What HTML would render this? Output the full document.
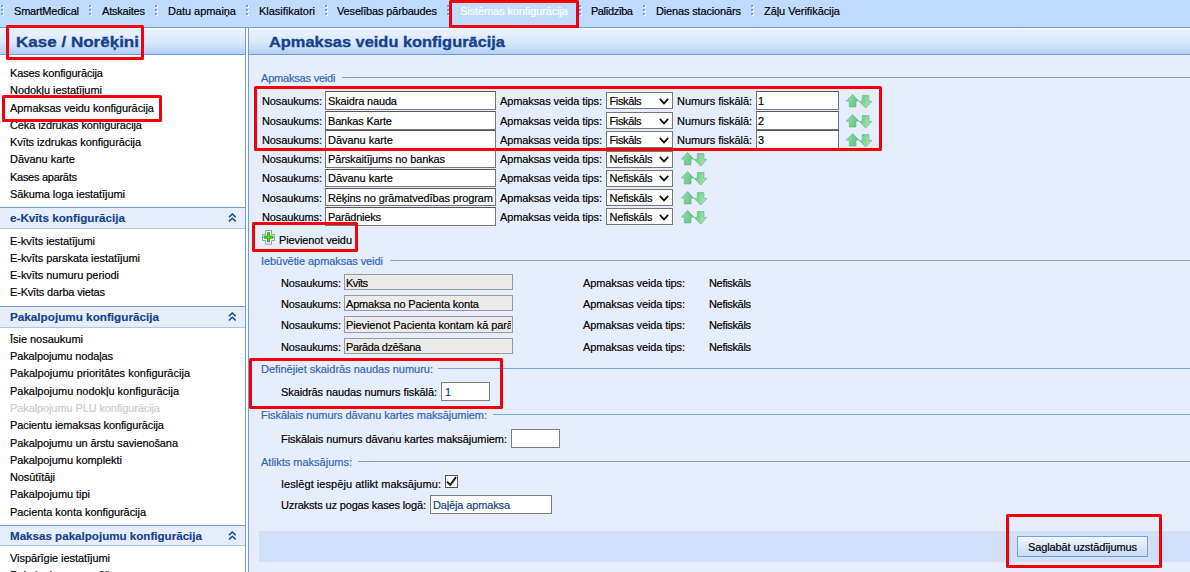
<!DOCTYPE html>
<html><head><meta charset="utf-8"><title>Apmaksas veidu konfigurācija</title><style>
html,body{margin:0;padding:0}
body{width:1190px;height:572px;overflow:hidden;position:relative;background:#bfdbff;font-family:"Liberation Sans", sans-serif;}
.abs,.t,.sh,.ln,.inp,.inpd,.inp1,.sel,.red,.cb,.btn,.bbar,.chev{position:absolute;box-sizing:content-box}
.t{white-space:pre;line-height:16px;height:16px;-webkit-text-stroke:0.18px currentColor}
#navline{position:absolute;left:0;top:27px;width:1190px;height:1px;background:#6f9dd9}
#navsel{position:absolute;left:453px;top:0;width:122px;height:24px;background:#c1dcff}
.dots{position:absolute;top:5px;width:3px;height:12px}
#lhead{position:absolute;left:0;top:28px;width:245px;height:26px;background:linear-gradient(#ffffff 0%,#e9f2ff 7%,#dce9fd 52%,#c6dcfb 78%,#afd0fb 100%);border-bottom:1px solid #6f9dd9}
#lbody{position:absolute;left:0;top:55px;width:245px;height:517px;background:#fff}
#lbord{position:absolute;left:245px;top:28px;width:1px;height:544px;background:#6f9dd9}
#split{position:absolute;left:246px;top:28px;width:2px;height:544px;background:#fdfeff}
#rbord{position:absolute;left:248px;top:28px;width:1px;height:544px;background:#6f9dd9}
#rhead{position:absolute;left:249px;top:28px;width:941px;height:26px;background:linear-gradient(#ffffff 0%,#e9f2ff 7%,#dce9fd 52%,#c6dcfb 78%,#afd0fb 100%);border-bottom:1px solid #6f9dd9}
#rbody{position:absolute;left:249px;top:55px;width:941px;height:517px;background:#e6edfc}
.sh{left:0;width:245px;background:#e6eefd;border-top:1px solid #6f9dd9;border-bottom:1px solid #a9c7f0}
.ln{width:900px;height:1px;background:#7ba3dc;right:0}
.inp{background:#fff;border:1px solid #767676;border-top-color:#555}
.inp1{background:#fff;border:1px solid #7f7f7f}
.inpd{background:#ebebeb;border:1px solid #9a9a9a}
.sel{background:#fff;border:1px solid #767676}
.cb{width:11px;height:11px;background:#fff;border:1px solid #555}
.bbar{left:259px;top:531px;width:931px;height:31px;background:#d1dff8}
.btn{border:1px solid #7b9ed6;background:linear-gradient(#f4f8ff,#dbe7fb 50%,#c7dafa)}
.red{border:3px solid #f4000c;border-radius:1.5px}
</style></head>
<body>
<svg width="0" height="0" style="position:absolute"><defs><linearGradient id="ga" x1="0" y1="0" x2="1" y2="0.3"><stop offset="0" stop-color="#b2e5c0"/><stop offset="0.55" stop-color="#7ace94"/><stop offset="1" stop-color="#68c486"/></linearGradient><linearGradient id="gb" x1="0" y1="0" x2="1" y2="0.3"><stop offset="0" stop-color="#6cc689"/><stop offset="0.5" stop-color="#84d39c"/><stop offset="1" stop-color="#aee3bd"/></linearGradient></defs></svg><div id="navsel"></div><svg class="dots" style="left:1px" width="3" height="12" viewBox="0 0 3 12"><g fill="#fff"><rect x="1" y="1" width="2" height="2"/><rect x="1" y="5" width="2" height="2"/><rect x="1" y="9" width="2" height="2"/></g><g fill="#6a9ee6"><rect x="0" y="0" width="2" height="2"/><rect x="0" y="4" width="2" height="2"/><rect x="0" y="8" width="2" height="2"/></g></svg><svg class="dots" style="left:89px" width="3" height="12" viewBox="0 0 3 12"><g fill="#fff"><rect x="1" y="1" width="2" height="2"/><rect x="1" y="5" width="2" height="2"/><rect x="1" y="9" width="2" height="2"/></g><g fill="#6a9ee6"><rect x="0" y="0" width="2" height="2"/><rect x="0" y="4" width="2" height="2"/><rect x="0" y="8" width="2" height="2"/></g></svg><svg class="dots" style="left:155px" width="3" height="12" viewBox="0 0 3 12"><g fill="#fff"><rect x="1" y="1" width="2" height="2"/><rect x="1" y="5" width="2" height="2"/><rect x="1" y="9" width="2" height="2"/></g><g fill="#6a9ee6"><rect x="0" y="0" width="2" height="2"/><rect x="0" y="4" width="2" height="2"/><rect x="0" y="8" width="2" height="2"/></g></svg><svg class="dots" style="left:246px" width="3" height="12" viewBox="0 0 3 12"><g fill="#fff"><rect x="1" y="1" width="2" height="2"/><rect x="1" y="5" width="2" height="2"/><rect x="1" y="9" width="2" height="2"/></g><g fill="#6a9ee6"><rect x="0" y="0" width="2" height="2"/><rect x="0" y="4" width="2" height="2"/><rect x="0" y="8" width="2" height="2"/></g></svg><svg class="dots" style="left:325px" width="3" height="12" viewBox="0 0 3 12"><g fill="#fff"><rect x="1" y="1" width="2" height="2"/><rect x="1" y="5" width="2" height="2"/><rect x="1" y="9" width="2" height="2"/></g><g fill="#6a9ee6"><rect x="0" y="0" width="2" height="2"/><rect x="0" y="4" width="2" height="2"/><rect x="0" y="8" width="2" height="2"/></g></svg><svg class="dots" style="left:447px" width="3" height="12" viewBox="0 0 3 12"><g fill="#fff"><rect x="1" y="1" width="2" height="2"/><rect x="1" y="5" width="2" height="2"/><rect x="1" y="9" width="2" height="2"/></g><g fill="#6a9ee6"><rect x="0" y="0" width="2" height="2"/><rect x="0" y="4" width="2" height="2"/><rect x="0" y="8" width="2" height="2"/></g></svg><svg class="dots" style="left:579px" width="3" height="12" viewBox="0 0 3 12"><g fill="#fff"><rect x="1" y="1" width="2" height="2"/><rect x="1" y="5" width="2" height="2"/><rect x="1" y="9" width="2" height="2"/></g><g fill="#6a9ee6"><rect x="0" y="0" width="2" height="2"/><rect x="0" y="4" width="2" height="2"/><rect x="0" y="8" width="2" height="2"/></g></svg><svg class="dots" style="left:643px" width="3" height="12" viewBox="0 0 3 12"><g fill="#fff"><rect x="1" y="1" width="2" height="2"/><rect x="1" y="5" width="2" height="2"/><rect x="1" y="9" width="2" height="2"/></g><g fill="#6a9ee6"><rect x="0" y="0" width="2" height="2"/><rect x="0" y="4" width="2" height="2"/><rect x="0" y="8" width="2" height="2"/></g></svg><svg class="dots" style="left:751px" width="3" height="12" viewBox="0 0 3 12"><g fill="#fff"><rect x="1" y="1" width="2" height="2"/><rect x="1" y="5" width="2" height="2"/><rect x="1" y="9" width="2" height="2"/></g><g fill="#6a9ee6"><rect x="0" y="0" width="2" height="2"/><rect x="0" y="4" width="2" height="2"/><rect x="0" y="8" width="2" height="2"/></g></svg><div id="navline"></div>
<div id="lhead"></div><div id="lbody"></div><div id="lbord"></div><div id="split"></div><div id="rbord"></div>
<div id="rhead"></div><div id="rbody"></div>
<div class="sh" style="top:207px;height:20px"></div><svg class="chev" style="left:227.8px;top:213.1px" width="9" height="10" viewBox="0 0 9 10"><path d="M0.9 4.3 L4.3 1 L7.7 4.3 M0.9 8.6 L4.3 5.3 L7.7 8.6" fill="none" stroke="#15428b" stroke-width="1.45"/></svg><div class="sh" style="top:306px;height:20px"></div><svg class="chev" style="left:227.8px;top:312.1px" width="9" height="10" viewBox="0 0 9 10"><path d="M0.9 4.3 L4.3 1 L7.7 4.3 M0.9 8.6 L4.3 5.3 L7.7 8.6" fill="none" stroke="#15428b" stroke-width="1.45"/></svg><div class="sh" style="top:525px;height:19px"></div><svg class="chev" style="left:227.8px;top:531.1px" width="9" height="10" viewBox="0 0 9 10"><path d="M0.9 4.3 L4.3 1 L7.7 4.3 M0.9 8.6 L4.3 5.3 L7.7 8.6" fill="none" stroke="#15428b" stroke-width="1.45"/></svg><div class="ln" style="left:342px;top:77px"></div><div class="ln" style="left:390px;top:260px"></div><div class="ln" style="left:438px;top:368px"></div><div class="ln" style="left:493px;top:414px"></div><div class="ln" style="left:358px;top:461px"></div><div class="inp" style="left:325px;top:91px;width:169px;height:17px"></div><div class="sel" style="left:606px;top:92px;width:65px;height:15px"></div><svg class="abs" style="left:659px;top:98px" width="10" height="7" viewBox="0 0 10 7"><path d="M0.8 0.9 L5 5.4 L9.2 0.9" fill="none" stroke="#111" stroke-width="1.7"/></svg><div class="inp" style="left:756px;top:91px;width:81px;height:17px"></div><svg class="abs" style="left:845.8px;top:93.9px" width="27" height="15" viewBox="0 0 27 15"><path d="M6.6 0.5 L12.8 7.1 L9.9 7.1 L9.9 12.9 L3.3 12.9 L3.3 7.1 L0.4 7.1 Z" fill="url(#ga)" stroke="#5fba7d" stroke-width="0.7"/><path d="M16.3 1.6 L22.9 1.6 L22.9 7.4 L25.8 7.4 L19.6 14 L13.4 7.4 L16.3 7.4 Z" fill="url(#gb)" stroke="#5fba7d" stroke-width="0.7"/></svg><div class="inp" style="left:325px;top:111px;width:169px;height:17px"></div><div class="sel" style="left:606px;top:112px;width:65px;height:15px"></div><svg class="abs" style="left:659px;top:118px" width="10" height="7" viewBox="0 0 10 7"><path d="M0.8 0.9 L5 5.4 L9.2 0.9" fill="none" stroke="#111" stroke-width="1.7"/></svg><div class="inp" style="left:756px;top:111px;width:81px;height:17px"></div><svg class="abs" style="left:845.8px;top:113.9px" width="27" height="15" viewBox="0 0 27 15"><path d="M6.6 0.5 L12.8 7.1 L9.9 7.1 L9.9 12.9 L3.3 12.9 L3.3 7.1 L0.4 7.1 Z" fill="url(#ga)" stroke="#5fba7d" stroke-width="0.7"/><path d="M16.3 1.6 L22.9 1.6 L22.9 7.4 L25.8 7.4 L19.6 14 L13.4 7.4 L16.3 7.4 Z" fill="url(#gb)" stroke="#5fba7d" stroke-width="0.7"/></svg><div class="inp" style="left:325px;top:130px;width:169px;height:17px"></div><div class="sel" style="left:606px;top:131px;width:65px;height:15px"></div><svg class="abs" style="left:659px;top:137px" width="10" height="7" viewBox="0 0 10 7"><path d="M0.8 0.9 L5 5.4 L9.2 0.9" fill="none" stroke="#111" stroke-width="1.7"/></svg><div class="inp" style="left:756px;top:130px;width:81px;height:17px"></div><svg class="abs" style="left:845.8px;top:132.9px" width="27" height="15" viewBox="0 0 27 15"><path d="M6.6 0.5 L12.8 7.1 L9.9 7.1 L9.9 12.9 L3.3 12.9 L3.3 7.1 L0.4 7.1 Z" fill="url(#ga)" stroke="#5fba7d" stroke-width="0.7"/><path d="M16.3 1.6 L22.9 1.6 L22.9 7.4 L25.8 7.4 L19.6 14 L13.4 7.4 L16.3 7.4 Z" fill="url(#gb)" stroke="#5fba7d" stroke-width="0.7"/></svg><div class="inp" style="left:325px;top:150px;width:169px;height:16px"></div><div class="sel" style="left:606px;top:151px;width:65px;height:15px"></div><svg class="abs" style="left:659px;top:156px" width="10" height="7" viewBox="0 0 10 7"><path d="M0.8 0.9 L5 5.4 L9.2 0.9" fill="none" stroke="#111" stroke-width="1.7"/></svg><svg class="abs" style="left:680.8px;top:151.9px" width="27" height="15" viewBox="0 0 27 15"><path d="M6.6 0.5 L12.8 7.1 L9.9 7.1 L9.9 12.9 L3.3 12.9 L3.3 7.1 L0.4 7.1 Z" fill="url(#ga)" stroke="#5fba7d" stroke-width="0.7"/><path d="M16.3 1.6 L22.9 1.6 L22.9 7.4 L25.8 7.4 L19.6 14 L13.4 7.4 L16.3 7.4 Z" fill="url(#gb)" stroke="#5fba7d" stroke-width="0.7"/></svg><div class="inp" style="left:325px;top:169px;width:169px;height:16px"></div><div class="sel" style="left:606px;top:170px;width:65px;height:15px"></div><svg class="abs" style="left:659px;top:175px" width="10" height="7" viewBox="0 0 10 7"><path d="M0.8 0.9 L5 5.4 L9.2 0.9" fill="none" stroke="#111" stroke-width="1.7"/></svg><svg class="abs" style="left:680.8px;top:170.9px" width="27" height="15" viewBox="0 0 27 15"><path d="M6.6 0.5 L12.8 7.1 L9.9 7.1 L9.9 12.9 L3.3 12.9 L3.3 7.1 L0.4 7.1 Z" fill="url(#ga)" stroke="#5fba7d" stroke-width="0.7"/><path d="M16.3 1.6 L22.9 1.6 L22.9 7.4 L25.8 7.4 L19.6 14 L13.4 7.4 L16.3 7.4 Z" fill="url(#gb)" stroke="#5fba7d" stroke-width="0.7"/></svg><div class="inp" style="left:325px;top:188px;width:169px;height:16px"></div><div class="sel" style="left:606px;top:189px;width:65px;height:15px"></div><svg class="abs" style="left:659px;top:195px" width="10" height="7" viewBox="0 0 10 7"><path d="M0.8 0.9 L5 5.4 L9.2 0.9" fill="none" stroke="#111" stroke-width="1.7"/></svg><svg class="abs" style="left:680.8px;top:190.9px" width="27" height="15" viewBox="0 0 27 15"><path d="M6.6 0.5 L12.8 7.1 L9.9 7.1 L9.9 12.9 L3.3 12.9 L3.3 7.1 L0.4 7.1 Z" fill="url(#ga)" stroke="#5fba7d" stroke-width="0.7"/><path d="M16.3 1.6 L22.9 1.6 L22.9 7.4 L25.8 7.4 L19.6 14 L13.4 7.4 L16.3 7.4 Z" fill="url(#gb)" stroke="#5fba7d" stroke-width="0.7"/></svg><div class="inp" style="left:325px;top:207px;width:169px;height:17px"></div><div class="sel" style="left:606px;top:208px;width:65px;height:15px"></div><svg class="abs" style="left:659px;top:214px" width="10" height="7" viewBox="0 0 10 7"><path d="M0.8 0.9 L5 5.4 L9.2 0.9" fill="none" stroke="#111" stroke-width="1.7"/></svg><svg class="abs" style="left:680.8px;top:209.9px" width="27" height="15" viewBox="0 0 27 15"><path d="M6.6 0.5 L12.8 7.1 L9.9 7.1 L9.9 12.9 L3.3 12.9 L3.3 7.1 L0.4 7.1 Z" fill="url(#ga)" stroke="#5fba7d" stroke-width="0.7"/><path d="M16.3 1.6 L22.9 1.6 L22.9 7.4 L25.8 7.4 L19.6 14 L13.4 7.4 L16.3 7.4 Z" fill="url(#gb)" stroke="#5fba7d" stroke-width="0.7"/></svg><svg class="abs" style="left:262px;top:230px" width="13" height="15" viewBox="0 0 13 15"><path d="M3.5 0.5h6v4h3v6h-3v3.7h-6v-3.7h-3v-6h3z" fill="#f2f7f4" stroke="#8da2b4" stroke-width="1"/><path d="M5.5 2.5h2v3.5h3.5v2.2h-3.5v3.7h-2v-3.7h-3.5v-2.2h3.5z" fill="#52e00c" stroke="#2f9f26" stroke-width="0.9"/></svg><div class="inpd" style="left:344px;top:274px;width:167px;height:14px"></div><div class="inpd" style="left:344px;top:295px;width:167px;height:14px"></div><div class="inpd" style="left:344px;top:316px;width:167px;height:15px"></div><div class="inpd" style="left:344px;top:338px;width:167px;height:14px"></div><div class="inp1" style="left:441px;top:382px;width:47px;height:17px"></div><div class="inp1" style="left:511px;top:429px;width:47px;height:17px"></div><div class="cb" style="left:445px;top:475px"></div><svg class="abs" style="left:445px;top:475px" width="13" height="13" viewBox="0 0 13 13"><path d="M2 6.6 L5.2 10 L11 2.2" fill="none" stroke="#1a1a1a" stroke-width="2"/></svg><div class="inp1" style="left:430px;top:495px;width:120px;height:17px"></div><div class="bbar"></div><div class="btn" style="left:1017px;top:536px;width:129px;height:19px"></div>
<span class="t" style="left:14px;top:3.0px;font-size:11px;font-weight:normal;color:#000;letter-spacing:-0.205px">SmartMedical</span><span class="t" style="left:102px;top:3.0px;font-size:11px;font-weight:normal;color:#000;letter-spacing:-0.205px">Atskaites</span><span class="t" style="left:168px;top:3.0px;font-size:11px;font-weight:normal;color:#000;letter-spacing:-0.045px">Datu apmaiņa</span><span class="t" style="left:259px;top:3.0px;font-size:11px;font-weight:normal;color:#000;letter-spacing:-0.021px">Klasifikatori</span><span class="t" style="left:337px;top:3.0px;font-size:11px;font-weight:normal;color:#000;letter-spacing:-0.153px">Veselības pārbaudes</span><span class="t" style="left:460px;top:3.0px;font-size:11px;font-weight:normal;color:#fff;letter-spacing:-0.098px">Sistēmas konfigurācija</span><span class="t" style="left:591px;top:3.0px;font-size:11px;font-weight:normal;color:#000;letter-spacing:-0.484px">Palīdzība</span><span class="t" style="left:656px;top:3.0px;font-size:11px;font-weight:normal;color:#000;letter-spacing:-0.152px">Dienas stacionārs</span><span class="t" style="left:764px;top:3.0px;font-size:11px;font-weight:normal;color:#000;letter-spacing:-0.065px">Zāļu Verifikācija</span><span class="t" style="left:16px;top:34.0px;font-size:15px;font-weight:bold;color:#15428b;transform:scaleX(1.1348);transform-origin:0 50%;-webkit-text-stroke:0.35px #15428b">Kase / Norēķini</span><span class="t" style="left:10px;top:65.0px;font-size:11px;font-weight:normal;color:#000;letter-spacing:-0.133px">Kases konfigurācija</span><span class="t" style="left:10px;top:82.0px;font-size:11px;font-weight:normal;color:#000;letter-spacing:-0.052px">Nodokļu iestatījumi</span><span class="t" style="left:10px;top:100.0px;font-size:11px;font-weight:normal;color:#000;letter-spacing:-0.057px">Apmaksas veidu konfigurācija</span><span class="t" style="left:10px;top:117.0px;font-size:11px;font-weight:normal;color:#000;letter-spacing:-0.097px">Čeka izdrukas konfigurācija</span><span class="t" style="left:10px;top:134.0px;font-size:11px;font-weight:normal;color:#000;letter-spacing:-0.084px">Kvīts izdrukas konfigurācija</span><span class="t" style="left:10px;top:151.0px;font-size:11px;font-weight:normal;color:#000;letter-spacing:-0.040px">Dāvanu karte</span><span class="t" style="left:10px;top:169.0px;font-size:11px;font-weight:normal;color:#000;letter-spacing:-0.277px">Kases aparāts</span><span class="t" style="left:10px;top:186.0px;font-size:11px;font-weight:normal;color:#000;letter-spacing:-0.081px">Sākuma loga iestatījumi</span><span class="t" style="left:10px;top:233.0px;font-size:11px;font-weight:normal;color:#000;letter-spacing:-0.066px">E-kvīts iestatījumi</span><span class="t" style="left:10px;top:250.0px;font-size:11px;font-weight:normal;color:#000;letter-spacing:-0.053px">E-kvīts parskata iestatījumi</span><span class="t" style="left:10px;top:267.0px;font-size:11px;font-weight:normal;color:#000;letter-spacing:-0.050px">E-kvīts numuru periodi</span><span class="t" style="left:10px;top:284.0px;font-size:11px;font-weight:normal;color:#000;letter-spacing:-0.181px">E-Kvīts darba vietas</span><span class="t" style="left:10px;top:331.0px;font-size:11px;font-weight:normal;color:#000;letter-spacing:-0.029px">Īsie nosaukumi</span><span class="t" style="left:10px;top:348.0px;font-size:11px;font-weight:normal;color:#000;letter-spacing:-0.122px">Pakalpojumu nodaļas</span><span class="t" style="left:10px;top:365.0px;font-size:11px;font-weight:normal;color:#000;letter-spacing:0.007px">Pakalpojumu prioritātes konfigurācija</span><span class="t" style="left:10px;top:383.0px;font-size:11px;font-weight:normal;color:#000;letter-spacing:-0.031px">Pakalpojumu nodokļu konfigurācija</span><span class="t" style="left:10px;top:400.0px;font-size:11px;font-weight:normal;color:#cbcbcb;letter-spacing:-0.103px">Pakalpojumu PLU konfigurācija</span><span class="t" style="left:10px;top:417.0px;font-size:11px;font-weight:normal;color:#000;letter-spacing:-0.105px">Pacientu iemaksas konfigurācija</span><span class="t" style="left:10px;top:435.0px;font-size:11px;font-weight:normal;color:#000;letter-spacing:-0.104px">Pakalpojumu un ārstu savienošana</span><span class="t" style="left:10px;top:452.0px;font-size:11px;font-weight:normal;color:#000;letter-spacing:-0.056px">Pakalpojumu komplekti</span><span class="t" style="left:10px;top:469.0px;font-size:11px;font-weight:normal;color:#000;letter-spacing:-0.095px">Nosūtītāji</span><span class="t" style="left:10px;top:486.0px;font-size:11px;font-weight:normal;color:#000;letter-spacing:-0.048px">Pakalpojumu tipi</span><span class="t" style="left:10px;top:504.0px;font-size:11px;font-weight:normal;color:#000;letter-spacing:-0.059px">Pacienta konta konfigurācija</span><span class="t" style="left:10px;top:550.0px;font-size:11px;font-weight:normal;color:#000;letter-spacing:-0.062px">Vispārīgie iestatījumi</span><span class="t" style="left:10px;top:567.0px;font-size:11px;font-weight:normal;color:#000;letter-spacing:-0.032px">Pakalpojumu grupēšana</span><span class="t" style="left:10px;top:210.0px;font-size:11px;font-weight:bold;color:#15428b;transform:scaleX(1.0628);transform-origin:0 50%;-webkit-text-stroke:0.15px #15428b">e-Kvīts konfigurācija</span><span class="t" style="left:10px;top:309.0px;font-size:11px;font-weight:bold;color:#15428b;transform:scaleX(1.0644);transform-origin:0 50%;-webkit-text-stroke:0.15px #15428b">Pakalpojumu konfigurācija</span><span class="t" style="left:10px;top:528.0px;font-size:11px;font-weight:bold;color:#15428b;transform:scaleX(1.0539);transform-origin:0 50%;-webkit-text-stroke:0.15px #15428b">Maksas pakalpojumu konfigurācija</span><span class="t" style="left:269px;top:34.0px;font-size:15px;font-weight:bold;color:#15428b;transform:scaleX(1.0930);transform-origin:0 50%;-webkit-text-stroke:0.35px #15428b">Apmaksas veidu konfigurācija</span><span class="t" style="left:261px;top:69.6px;font-size:11px;font-weight:normal;color:#3165b5;letter-spacing:-0.196px">Apmaksas veidi</span><span class="t" style="left:261px;top:252.6px;font-size:11px;font-weight:normal;color:#3165b5;letter-spacing:-0.066px">Iebūvētie apmaksas veidi</span><span class="t" style="left:261px;top:360.6px;font-size:11px;font-weight:normal;color:#3165b5;letter-spacing:-0.013px">Definējiet skaidrās naudas numuru:</span><span class="t" style="left:261px;top:406.6px;font-size:11px;font-weight:normal;color:#3165b5;letter-spacing:-0.063px">Fiskālais numurs dāvanu kartes maksājumiem:</span><span class="t" style="left:261px;top:453.6px;font-size:11px;font-weight:normal;color:#3165b5;letter-spacing:-0.005px">Atlikts maksājums:</span><span class="t" style="left:262px;top:93.0px;font-size:11px;font-weight:normal;color:#000;letter-spacing:-0.127px">Nosaukums:</span><span class="t" style="left:328px;top:93.0px;font-size:11px;font-weight:normal;color:#000;letter-spacing:-0.163px">Skaidra nauda</span><span class="t" style="left:500px;top:93.0px;font-size:11px;font-weight:normal;color:#000;letter-spacing:-0.102px">Apmaksas veida tips:</span><span class="t" style="left:609.5px;top:93.0px;font-size:11px;font-weight:normal;color:#000;letter-spacing:-0.372px">Fiskāls</span><span class="t" style="left:677px;top:93.0px;font-size:11px;font-weight:normal;color:#000;letter-spacing:-0.057px">Numurs fiskālā:</span><span class="t" style="left:758px;top:93.0px;font-size:11px;font-weight:normal;color:#000;letter-spacing:0.000px">1</span><span class="t" style="left:262px;top:113.0px;font-size:11px;font-weight:normal;color:#000;letter-spacing:-0.127px">Nosaukums:</span><span class="t" style="left:328px;top:113.0px;font-size:11px;font-weight:normal;color:#000;letter-spacing:-0.186px">Bankas Karte</span><span class="t" style="left:500px;top:113.0px;font-size:11px;font-weight:normal;color:#000;letter-spacing:-0.102px">Apmaksas veida tips:</span><span class="t" style="left:609.5px;top:113.0px;font-size:11px;font-weight:normal;color:#000;letter-spacing:-0.372px">Fiskāls</span><span class="t" style="left:677px;top:113.0px;font-size:11px;font-weight:normal;color:#000;letter-spacing:-0.057px">Numurs fiskālā:</span><span class="t" style="left:758px;top:113.0px;font-size:11px;font-weight:normal;color:#000;letter-spacing:0.000px">2</span><span class="t" style="left:262px;top:132.0px;font-size:11px;font-weight:normal;color:#000;letter-spacing:-0.127px">Nosaukums:</span><span class="t" style="left:328px;top:132.0px;font-size:11px;font-weight:normal;color:#000;letter-spacing:-0.040px">Dāvanu karte</span><span class="t" style="left:500px;top:132.0px;font-size:11px;font-weight:normal;color:#000;letter-spacing:-0.102px">Apmaksas veida tips:</span><span class="t" style="left:609.5px;top:132.0px;font-size:11px;font-weight:normal;color:#000;letter-spacing:-0.372px">Fiskāls</span><span class="t" style="left:677px;top:132.0px;font-size:11px;font-weight:normal;color:#000;letter-spacing:-0.057px">Numurs fiskālā:</span><span class="t" style="left:758px;top:132.0px;font-size:11px;font-weight:normal;color:#000;letter-spacing:0.000px">3</span><span class="t" style="left:262px;top:151.0px;font-size:11px;font-weight:normal;color:#000;letter-spacing:-0.127px">Nosaukums:</span><span class="t" style="left:328px;top:151.0px;font-size:11px;font-weight:normal;color:#000;letter-spacing:-0.129px">Pārskaitījums no bankas</span><span class="t" style="left:500px;top:151.0px;font-size:11px;font-weight:normal;color:#000;letter-spacing:-0.102px">Apmaksas veida tips:</span><span class="t" style="left:609.5px;top:151.0px;font-size:11px;font-weight:normal;color:#000;letter-spacing:-0.203px">Nefiskāls</span><span class="t" style="left:262px;top:170.0px;font-size:11px;font-weight:normal;color:#000;letter-spacing:-0.127px">Nosaukums:</span><span class="t" style="left:328px;top:170.0px;font-size:11px;font-weight:normal;color:#000;letter-spacing:-0.040px">Dāvanu karte</span><span class="t" style="left:500px;top:170.0px;font-size:11px;font-weight:normal;color:#000;letter-spacing:-0.102px">Apmaksas veida tips:</span><span class="t" style="left:609.5px;top:170.0px;font-size:11px;font-weight:normal;color:#000;letter-spacing:-0.203px">Nefiskāls</span><span class="t" style="left:262px;top:190.0px;font-size:11px;font-weight:normal;color:#000;letter-spacing:-0.127px">Nosaukums:</span><span class="t" style="left:328px;top:190.0px;font-size:11px;font-weight:normal;color:#000;letter-spacing:-0.125px">Rēķins no grāmatvedības program</span><span class="t" style="left:500px;top:190.0px;font-size:11px;font-weight:normal;color:#000;letter-spacing:-0.102px">Apmaksas veida tips:</span><span class="t" style="left:609.5px;top:190.0px;font-size:11px;font-weight:normal;color:#000;letter-spacing:-0.203px">Nefiskāls</span><span class="t" style="left:262px;top:209.0px;font-size:11px;font-weight:normal;color:#000;letter-spacing:-0.127px">Nosaukums:</span><span class="t" style="left:328px;top:209.0px;font-size:11px;font-weight:normal;color:#000;letter-spacing:-0.227px">Parādnieks</span><span class="t" style="left:500px;top:209.0px;font-size:11px;font-weight:normal;color:#000;letter-spacing:-0.102px">Apmaksas veida tips:</span><span class="t" style="left:609.5px;top:209.0px;font-size:11px;font-weight:normal;color:#000;letter-spacing:-0.203px">Nefiskāls</span><span class="t" style="left:279px;top:232.0px;font-size:11px;font-weight:normal;color:#000;letter-spacing:-0.115px">Pievienot veidu</span><span class="t" style="left:281px;top:275.0px;font-size:11px;font-weight:normal;color:#000;letter-spacing:-0.127px">Nosaukums:</span><span class="t" style="left:346px;top:275.0px;font-size:11px;font-weight:normal;color:#000;letter-spacing:-0.600px">Kvīts</span><span class="t" style="left:583px;top:275.0px;font-size:11px;font-weight:normal;color:#000;letter-spacing:-0.102px">Apmaksas veida tips:</span><span class="t" style="left:709px;top:275.0px;font-size:11px;font-weight:normal;color:#000;letter-spacing:-0.328px">Nefiskāls</span><span class="t" style="left:281px;top:296.0px;font-size:11px;font-weight:normal;color:#000;letter-spacing:-0.127px">Nosaukums:</span><span class="t" style="left:346px;top:296.0px;font-size:11px;font-weight:normal;color:#000;letter-spacing:-0.166px">Apmaksa no Pacienta konta</span><span class="t" style="left:583px;top:296.0px;font-size:11px;font-weight:normal;color:#000;letter-spacing:-0.102px">Apmaksas veida tips:</span><span class="t" style="left:709px;top:296.0px;font-size:11px;font-weight:normal;color:#000;letter-spacing:-0.328px">Nefiskāls</span><span class="t" style="left:281px;top:317.0px;font-size:11px;font-weight:normal;color:#000;letter-spacing:-0.127px">Nosaukums:</span><span class="t" style="left:346px;top:317.0px;font-size:11px;font-weight:normal;color:#000;letter-spacing:-0.094px;width:165px;overflow:hidden">Pievienot Pacienta kontam kā parā</span><span class="t" style="left:583px;top:317.0px;font-size:11px;font-weight:normal;color:#000;letter-spacing:-0.102px">Apmaksas veida tips:</span><span class="t" style="left:709px;top:317.0px;font-size:11px;font-weight:normal;color:#000;letter-spacing:-0.328px">Nefiskāls</span><span class="t" style="left:281px;top:339.0px;font-size:11px;font-weight:normal;color:#000;letter-spacing:-0.127px">Nosaukums:</span><span class="t" style="left:346px;top:339.0px;font-size:11px;font-weight:normal;color:#000;letter-spacing:-0.394px">Parāda dzēšana</span><span class="t" style="left:583px;top:339.0px;font-size:11px;font-weight:normal;color:#000;letter-spacing:-0.102px">Apmaksas veida tips:</span><span class="t" style="left:709px;top:339.0px;font-size:11px;font-weight:normal;color:#000;letter-spacing:-0.328px">Nefiskāls</span><span class="t" style="left:281px;top:384.0px;font-size:11px;font-weight:normal;color:#000;letter-spacing:-0.099px">Skaidrās naudas numurs fiskālā:</span><span class="t" style="left:445px;top:384.0px;font-size:11px;font-weight:normal;color:#15428b;letter-spacing:0.000px">1</span><span class="t" style="left:281px;top:431.0px;font-size:11px;font-weight:normal;color:#000;letter-spacing:-0.063px">Fiskālais numurs dāvanu kartes maksājumiem:</span><span class="t" style="left:281px;top:476.0px;font-size:11px;font-weight:normal;color:#000;letter-spacing:0.051px">Ieslēgt iespēju atlikt maksājumu:</span><span class="t" style="left:281px;top:497.0px;font-size:11px;font-weight:normal;color:#000;letter-spacing:-0.150px">Uzraksts uz pogas kases logā:</span><span class="t" style="left:433px;top:497.0px;font-size:11px;font-weight:normal;color:#15428b;letter-spacing:-0.144px">Daļēja apmaksa</span><span class="t" style="left:1028px;top:539.0px;font-size:11px;font-weight:normal;color:#000;letter-spacing:-0.115px">Saglabāt uzstādījumus</span>
<div class="red" style="left:6px;top:25px;width:132px;height:29px"></div><div class="red" style="left:449px;top:0px;width:124px;height:22px"></div><div class="red" style="left:2px;top:95px;width:154px;height:21px"></div><div class="red" style="left:254px;top:86px;width:622px;height:59px"></div><div class="red" style="left:252px;top:222px;width:100px;height:24px"></div><div class="red" style="left:249px;top:358px;width:248px;height:45px"></div><div class="red" style="left:1006px;top:514px;width:150px;height:48px"></div>
</body></html>
